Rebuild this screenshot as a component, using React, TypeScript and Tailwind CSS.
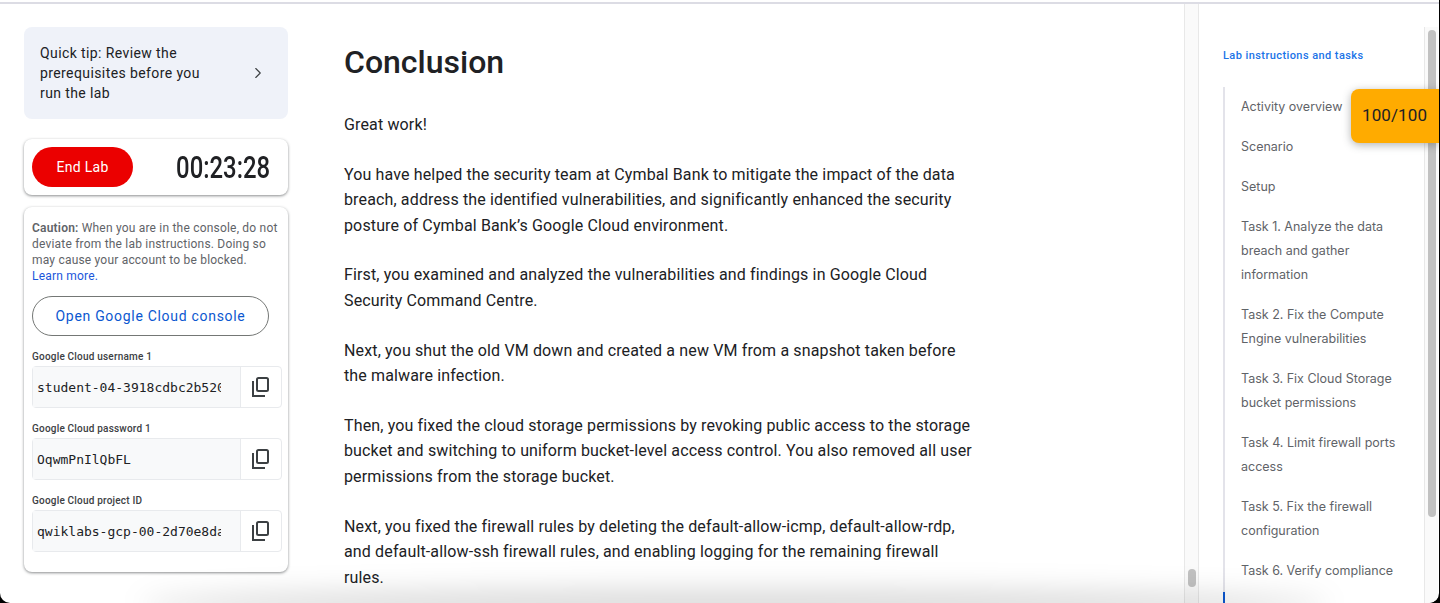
import React from 'react';
import { ChevronRight } from 'lucide-react';

const credentials = [
    { label: 'Google Cloud username 1', value: 'student-04-3918cdbc2b520a1f@qwiklabs.net' },
    { label: 'Google Cloud password 1', value: 'OqwmPnIlQbFL' },
    { label: 'Google Cloud project ID', value: 'qwiklabs-gcp-00-2d70e8da4f1c' },
];

const paragraphs = [
    'Great work!',
    'You have helped the security team at Cymbal Bank to mitigate the impact of the data breach, address the identified vulnerabilities, and significantly enhanced the security posture of Cymbal Bank’s Google Cloud environment.',
    'First, you examined and analyzed the vulnerabilities and findings in Google Cloud Security Command Centre.',
    'Next, you shut the old VM down and created a new VM from a snapshot taken before the malware infection.',
    'Then, you fixed the cloud storage permissions by revoking public access to the storage bucket and switching to uniform bucket-level access control. You also removed all user permissions from the storage bucket.',
    'Next, you fixed the firewall rules by deleting the default-allow-icmp, default-allow-rdp, and default-allow-ssh firewall rules, and enabling logging for the remaining firewall rules.',
];

const tocItems = [
    'Activity overview',
    'Scenario',
    'Setup',
    'Task 1. Analyze the data breach and gather information',
    'Task 2. Fix the Compute Engine vulnerabilities',
    'Task 3. Fix Cloud Storage bucket permissions',
    'Task 4. Limit firewall ports access',
    'Task 5. Fix the firewall configuration',
    'Task 6. Verify compliance',
];

function CopyIcon() {
    return (
        <svg width="24" height="24" viewBox="0 0 24 24" fill="none" stroke="#3c4043" strokeWidth="2" className="mr-[1px]">
            <rect x="8" y="3" width="11" height="13" rx="1.5" />
            <path d="M4 6v15h12" />
        </svg>
    );
}

function CredentialField({ label, value }: { label: string; value: string }) {
    return (
        <div className="mb-[13px]">
            <div className="text-[10px] leading-[16px] font-medium tracking-[0.2px] text-[#3c4043] mb-[1px]">{label}</div>
            <div className="flex h-[42px] rounded border border-[#e8eaed]">
                <div className="w-[208px] shrink-0 bg-[#f8f9fa] border-r border-[#e8eaed] pl-[4px] pt-[1px] flex items-center">
                    <div className="w-[184px] overflow-hidden whitespace-nowrap font-['DejaVu_Sans_Mono',monospace] text-[13px] leading-[18px] text-[#202124]">
                        {value}
                    </div>
                </div>
                <div className="flex-1 flex items-center justify-center">
                    <CopyIcon />
                </div>
            </div>
        </div>
    );
}

export default function App() {
    return (
        <div className="h-[603px] w-[1440px] overflow-hidden bg-black font-['Roboto',sans-serif]">
            <div className="relative h-full w-[1439px] overflow-hidden rounded-b-[10px] bg-white flex flex-col">
                <div className="h-[4px] shrink-0 pt-[2px]">
                    <div className="h-[2px] bg-[#dcdce4]" />
                </div>
                <div className="flex-1 flex min-h-0">
                    {/* left column */}
                    <aside className="w-[288px] shrink-0 pl-[24px] pt-[23px]">
                        <div className="h-[92px] rounded-lg bg-[#eff2f9] flex items-center justify-between pl-[16px] pr-[21px]">
                            <p className="w-[180px] text-sm leading-[20px] tracking-[0.4px] text-[#202124]">
                                Quick tip: Review the prerequisites before you run the lab
                            </p>
                            <ChevronRight size={18} strokeWidth={1.5} className="text-[#3c4043]" />
                        </div>
                        <div className="mt-[20px] h-[56px] rounded-lg bg-white shadow-[0_1px_3px_rgba(60,64,67,0.6)] flex items-center justify-between pl-[8px] pr-[18px]">
                            <button className="h-[40px] w-[101px] rounded-[20px] bg-[#eb0000] text-sm tracking-[0.3px] text-white">End Lab</button>
                            <span className="inline-block origin-right scale-x-[0.77] text-[31px] font-medium leading-none text-[#202124] whitespace-nowrap">00:23:28</span>
                        </div>
                        <div className="mt-[12px] h-[365px] rounded-lg bg-white shadow-[0_1px_3px_rgba(60,64,67,0.6)] pl-[8px] pr-[6px] pt-[13px]">
                            <p className="text-xs leading-[16px] tracking-[0.2px] text-[#5f6368]">
                                <span className="font-semibold">Caution:</span> When you are in the console, do not deviate from the lab instructions. Doing so may cause your account to be blocked.
                                <span className="block text-[#1a56db]">Learn more.</span>
                            </p>
                            <button className="mt-[12px] mb-[13px] h-[40px] w-[237px] rounded-[20px] border border-[#747775] text-sm tracking-[0.7px] text-[#0b57d0]">
                                Open Google Cloud console
                            </button>
                            {credentials.map(c => (
                                <CredentialField key={c.label} label={c.label} value={c.value} />
                            ))}
                        </div>
                    </aside>

                    {/* main content */}
                    <main className="flex-1 min-w-0 pl-[56px] pt-[39px]">
                        <h1 className="text-[32px] leading-[38px] font-medium text-[#202124]">Conclusion</h1>
                        <div className="mt-[31px] w-[632px] text-base leading-[25.6px] tracking-[0.14px] text-[#202124]">
                            {paragraphs.map(p => (
                                <p key={p} className="mb-[24px]">{p}</p>
                            ))}
                        </div>
                    </main>

                    {/* middle scrollbar */}
                    <div className="w-[15px] shrink-0 bg-[#fafafa] border-x border-[#e8e8e8] relative">
                        <div className="absolute left-[3px] top-[565px] h-[18px] w-[8px] rounded bg-[#c1c1c1]" />
                    </div>

                    {/* toc */}
                    <nav className="w-[240px] shrink-0 flex">
                        <div className="w-[225px] shrink-0 pl-[24px] pt-[44px]">
                            <div className="text-[11px] leading-[16px] font-medium tracking-[0.42px] text-[#1a73e8]">Lab instructions and tasks</div>
                            <ul className="mt-[23px] border-l-2 border-[#e3e3ea] pl-[16px] pr-[12px] pt-[8px] h-[600px] relative">
                                {tocItems.map(t => (
                                    <li key={t} className="mb-[16px] font-['Inter',sans-serif] text-[12.5px] leading-[24px] text-[#5f6368]">{t}</li>
                                ))}
                                <div className="absolute -left-[2px] top-[505px] h-[40px] w-[2px] bg-[#0b57d0]" />
                            </ul>
                        </div>
                        <div className="mt-[23px] w-[14px] shrink-0 bg-[#fafafa] border-l border-[#e8e8e8] pl-[3px] pt-[3px]">
                            <div className="h-[487px] w-[8px] rounded bg-[#c1c1c1]" />
                        </div>
                    </nav>
                </div>

                {/* score badge */}
                <div className="absolute right-0 top-[89px] h-[54px] w-[88px] rounded-l-lg bg-[#ffab00] shadow-[0_2px_8px_rgba(60,64,67,0.4)] flex items-center pl-[11px] text-[17px] tracking-[0.1px] text-[#202124]">
                    100/100
                </div>

                {/* window shadow along the bottom */}
                <div className="absolute -bottom-[18px] left-[140px] right-[110px] h-[32px] rounded-[50%] bg-black/15 blur-[14px]" />
            </div>
        </div>
    );
}
